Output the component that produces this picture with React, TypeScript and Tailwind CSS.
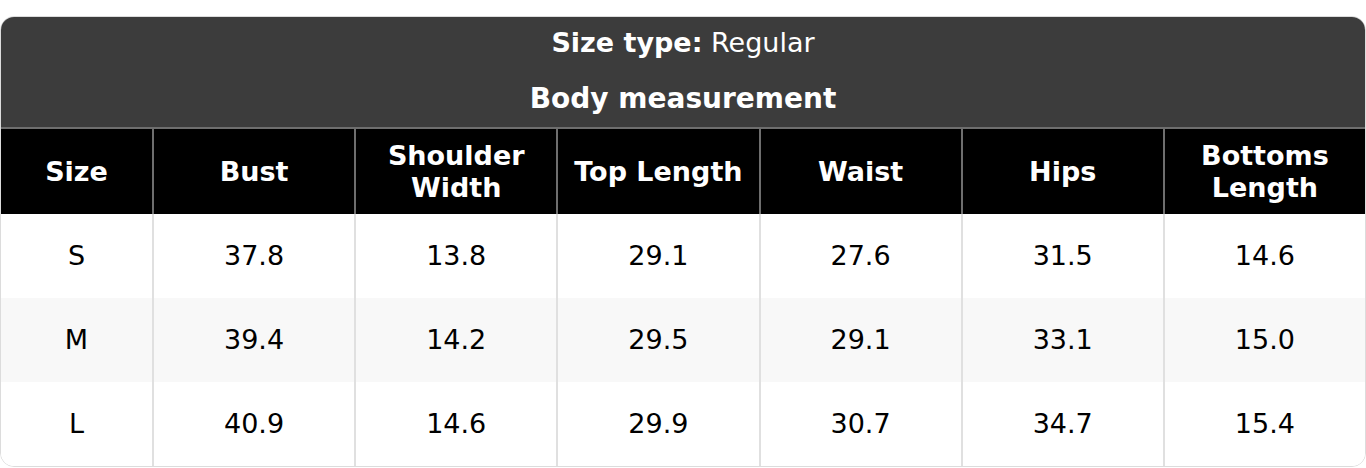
const columns = [
  "Size",
  "Bust",
  "Shoulder Width",
  "Top Length",
  "Waist",
  "Hips",
  "Bottoms Length",
];

const rows = [
  ["S", "37.8", "13.8", "29.1", "27.6", "31.5", "14.6"],
  ["M", "39.4", "14.2", "29.5", "29.1", "33.1", "15.0"],
  ["L", "40.9", "14.6", "29.9", "30.7", "34.7", "15.4"],
];

// Tabela rozmiarów: ciemny nagłówek z typem rozmiaru, czarny wiersz kolumn, jasne wiersze danych.
export default function App() {
  return (
    <div className="bg-white pt-4 font-['DejaVu_Sans',sans-serif] text-[27px] leading-[32px]">
      <div className="overflow-hidden rounded-[14px] border border-[#dcdcdc]">
        <div className="flex flex-col items-center gap-[24px] bg-[#3c3c3c] pb-[12px] pt-[10px] text-white">
          <p>
            <span className="font-bold">Size type:</span> Regular
          </p>
          <p className="text-[28px] font-bold">Body measurement</p>
        </div>

        <div className="grid grid-cols-[151px_repeat(6,1fr)] border-t-2 border-[#6e6e6e] bg-black font-bold text-white">
          {columns.map((label, index) => (
            <div
              key={label}
              className={`flex h-[85px] items-center justify-center px-2 text-center ${
                index > 0 ? "border-l-2 border-[#6e6e6e]" : ""
              }`}
            >
              {label === "Shoulder Width" || label === "Bottoms Length" ? (
                <span>
                  {label.split(" ")[0]}
                  <br />
                  {label.split(" ")[1]}
                </span>
              ) : (
                label
              )}
            </div>
          ))}
        </div>

        {rows.map((row, rowIndex) => (
          <div
            key={row[0]}
            className={`grid grid-cols-[151px_repeat(6,1fr)] text-black ${
              rowIndex === 1 ? "bg-[#f8f8f8]" : "bg-white"
            }`}
          >
            {row.map((value, index) => (
              <div
                key={index}
                className={`flex h-[84px] items-center justify-center ${
                  index > 0 ? "border-l-2 border-[#e0e0e0]" : ""
                }`}
              >
                {value}
              </div>
            ))}
          </div>
        ))}
      </div>
    </div>
  );
}
